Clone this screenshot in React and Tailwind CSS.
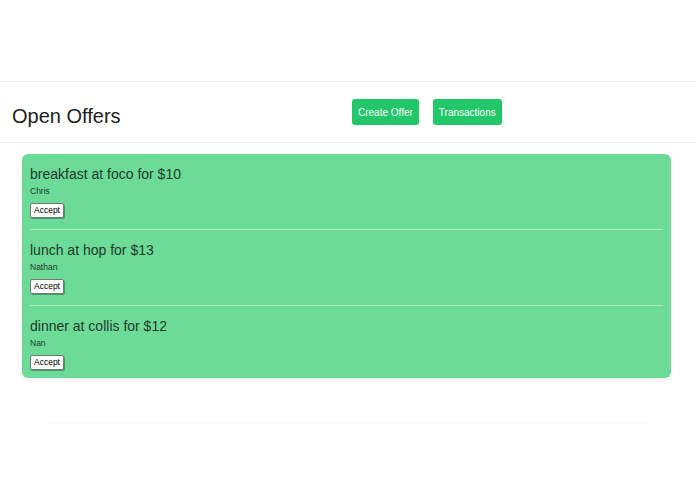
const offers = [
  { title: "breakfast at foco for $10", name: "Chris" },
  { title: "lunch at hop for $13", name: "Nathan" },
  { title: "dinner at collis for $12", name: "Nan" },
];

export default function App() {
  return (
    <div className="min-h-screen bg-white text-[#222] font-['Liberation_Sans',Arial,sans-serif]">
      <div className="h-[82px] border-b border-[#eeeeee]" />

      <div className="h-[61px] flex items-center border-b border-[#eeeeee]">
        <h1 className="w-[352px] pl-3 pt-[8px] text-[20px] text-[#222]">Open Offers</h1>
        <div className="flex gap-[14px]">
          <button className="h-[26px] px-[6px] whitespace-nowrap rounded-[3px] bg-[#22c76a] text-white text-[10px]">
            Create Offer
          </button>
          <button className="h-[26px] px-[6px] whitespace-nowrap rounded-[3px] bg-[#22c76a] text-white text-[10px]">
            Transactions
          </button>
        </div>
      </div>

      <div className="px-[22px] w-[693px] pt-[11px]">
        <div className="bg-[#6bdb97] rounded-[6px] px-2 shadow-[0_3px_3px_rgba(0,0,0,0.04)]">
          {offers.map((o, i) => (
            <div
              key={o.title}
              className={
                "pt-[12px] " +
                (i < offers.length - 1 ? "pb-[11px] border-b border-[#a8ecc2]" : "pb-[8px]")
              }
            >
              <h2 className="text-[14px] leading-[17px] text-[#1f3a2a]">{o.title}</h2>
              <p className="text-[8.5px] leading-[10px] mt-[3px] text-[#1f3a2a]">{o.name}</p>
              <button className="block mt-[7px] h-[15px] px-[3px] bg-white border border-[#777] rounded-[2px] text-[8.5px] leading-none text-black shadow-[1px_1px_0_rgba(0,0,0,0.3)]">
                Accept
              </button>
            </div>
          ))}
        </div>
      </div>

      <div className="mx-[45px] mt-[40px] h-[4px] shadow-[0_2px_3px_rgba(0,0,0,0.02)]" />
    </div>
  );
}
